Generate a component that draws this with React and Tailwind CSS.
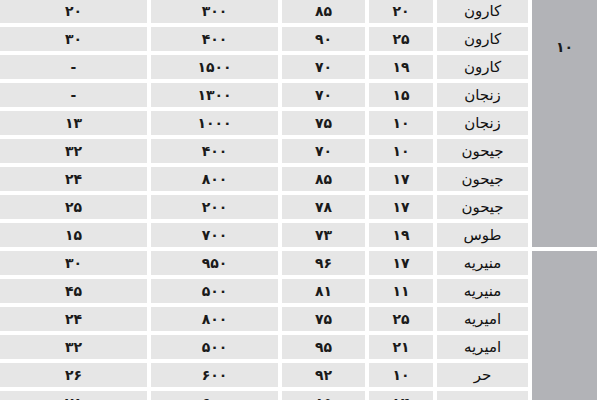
const rows = [
  ["کارون", "۲۰", "۸۵", "۳۰۰", "۲۰"],
  ["کارون", "۲۵", "۹۰", "۴۰۰", "۳۰"],
  ["کارون", "۱۹", "۷۰", "۱۵۰۰", "-"],
  ["زنجان", "۱۵", "۷۰", "۱۳۰۰", "-"],
  ["زنجان", "۱۰", "۷۵", "۱۰۰۰", "۱۳"],
  ["جیحون", "۱۰", "۷۰", "۴۰۰", "۳۲"],
  ["جیحون", "۱۷", "۸۵", "۸۰۰", "۲۴"],
  ["جیحون", "۱۷", "۷۸", "۲۰۰", "۲۵"],
  ["طوس", "۱۹", "۷۳", "۷۰۰", "۱۵"],
  ["منیریه", "۱۷", "۹۶", "۹۵۰", "۳۰"],
  ["منیریه", "۱۱", "۸۱", "۵۰۰", "۴۵"],
  ["امیریه", "۲۵", "۷۵", "۸۰۰", "۲۴"],
  ["امیریه", "۲۱", "۹۵", "۵۰۰", "۳۲"],
  ["حر", "۱۰", "۹۲", "۶۰۰", "۲۶"],
  ["حر", "۱۴", "۸۵", "۶۰۰", "۲۸"],
];

function Cell({ children, row, col }) {
  const isName = col === 0;
  return (
    <div
      className={
        isName
          ? "bg-[#e6e6e6] flex items-center justify-center h-[24px] text-[15px] font-normal text-[#111] leading-none"
          : "bg-[#e6e6e6] flex items-center justify-center h-[24px] text-[14px] font-bold text-[#1a1a1a] leading-none"
      }
      style={{ gridRow: row + 1, gridColumn: col + 2 }}
    >
      {children}
    </div>
  );
}

export default function App() {
  return (
    <div className="w-[600px] h-[400px] overflow-hidden bg-white" style={{ fontFamily: '"DejaVu Sans", sans-serif' }}>
      <div
        dir="rtl"
        className="grid grid-cols-[65px_91px_64px_83px_127px_1fr] auto-rows-[24px] gap-[4px] pr-[3px] mt-[-1px]"
      >
        <div className="bg-[#b2b3b7] row-span-9 col-start-1 row-start-1 flex justify-center pt-[41px] text-[14px] font-bold text-[#1a1a1a] leading-none">
          ۱۰
        </div>
        <div className="bg-[#b2b3b7] row-span-6 col-start-1 row-start-10"></div>
        {rows.map((r, i) =>
          r.map((v, j) => (
            <Cell key={i + "-" + j} row={i} col={j}>
              {v}
            </Cell>
          ))
        )}
      </div>
    </div>
  );
}
